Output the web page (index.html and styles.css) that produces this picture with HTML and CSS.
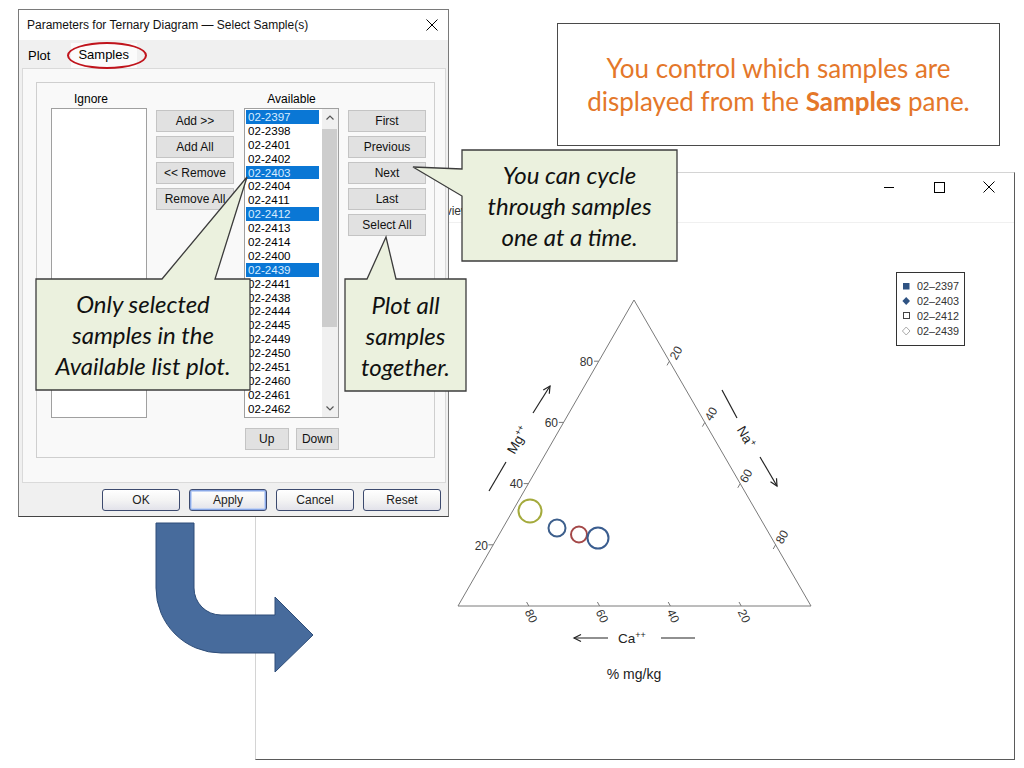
FILE: index.html
```html
<!DOCTYPE html>
<html>
<head>
<meta charset="utf-8">
<title>Ternary Diagram Samples</title>
<link rel="stylesheet" href="styles.css">
</head>
<body>
<div class="stage">

  <div class="plotwin">
    <div class="plotbar">
      <div class="ctrlrow">
        <span class="ctrl"><svg width="10" height="10" viewBox="0 0 10 10"><line x1="0" y1="5.5" x2="10" y2="5.5" stroke="#000"/></svg></span>
        <span class="ctrl"><svg width="11" height="11" viewBox="0 0 11 11"><rect x="0.5" y="0.5" width="10" height="10" fill="none" stroke="#000"/></svg></span>
        <span class="ctrl"><svg width="12" height="12" viewBox="0 0 12 12"><path d="M0.5 0.5 L11.5 11.5 M11.5 0.5 L0.5 11.5" stroke="#000"/></svg></span>
      </div>
      <div class="toolrow"><span>Preview</span></div>
    </div>
    <svg class="chart" width="758" height="536" viewBox="256 223 758 536">
      <polygon points="458,606 634,300 811,606" fill="none" stroke="#7a7a7a" stroke-width="1"/>
      <g stroke="#7a7a7a" stroke-width="1">
        <line x1="598.8" y1="361.2" x2="594" y2="361.2"/>
        <line x1="563.6" y1="422.4" x2="558.8" y2="422.4"/>
        <line x1="528.4" y1="483.6" x2="523.6" y2="483.6"/>
        <line x1="493.2" y1="544.8" x2="488.4" y2="544.8"/>
        <line x1="669.4" y1="361.2" x2="667" y2="365.4"/>
        <line x1="704.8" y1="422.4" x2="702.4" y2="426.6"/>
        <line x1="740.2" y1="483.6" x2="737.8" y2="487.8"/>
        <line x1="775.6" y1="544.8" x2="773.2" y2="549"/>
        <line x1="528.8" y1="606" x2="526.6" y2="602"/>
        <line x1="599.6" y1="606" x2="597.4" y2="602"/>
        <line x1="670.4" y1="606" x2="668.2" y2="602"/>
        <line x1="741.2" y1="606" x2="739" y2="602"/>
      </g>
      <g class="tick">
        <text x="593" y="365.5" text-anchor="end">80</text>
        <text x="558" y="426.5" text-anchor="end">60</text>
        <text x="523" y="487.5" text-anchor="end">40</text>
        <text x="488" y="549.5" text-anchor="end">20</text>
        <text transform="translate(676,353) rotate(-60)" text-anchor="middle" dy="4">20</text>
        <text transform="translate(711,414) rotate(-60)" text-anchor="middle" dy="4">40</text>
        <text transform="translate(746,476) rotate(-60)" text-anchor="middle" dy="4">60</text>
        <text transform="translate(782,537) rotate(-60)" text-anchor="middle" dy="4">80</text>
        <text transform="translate(531,616) rotate(65)" text-anchor="middle" dy="4">80</text>
        <text transform="translate(602,616) rotate(65)" text-anchor="middle" dy="4">60</text>
        <text transform="translate(673,616) rotate(65)" text-anchor="middle" dy="4">40</text>
        <text transform="translate(744,616) rotate(65)" text-anchor="middle" dy="4">20</text>
      </g>
      <g stroke="#222" stroke-width="1.2" fill="none">
        <line x1="489" y1="491" x2="506" y2="462"/>
        <line x1="533" y1="413" x2="550" y2="386"/>
        <polyline points="543.3,390 550,386 549.3,393.8"/>
        <line x1="722" y1="390" x2="737" y2="418"/>
        <line x1="760" y1="457" x2="777" y2="486"/>
        <polyline points="770.5,481.8 777,486 776.5,478.2"/>
        <line x1="608" y1="638" x2="574" y2="638"/>
        <polyline points="581,634.5 574,638 581,641.5"/>
        <line x1="661" y1="638" x2="695" y2="638"/>
      </g>
      <g class="axis">
        <text transform="translate(518,440) rotate(-60)" text-anchor="middle" dy="4.5">Mg<tspan dy="-5.5" font-size="9">++</tspan></text>
        <text transform="translate(746,437) rotate(60)" text-anchor="middle" dy="4.5">Na<tspan dy="-5.5" font-size="9">+</tspan></text>
        <text x="618" y="643">Ca<tspan dy="-5.5" font-size="9">++</tspan></text>
        <text class="unit" x="634" y="679" text-anchor="middle">% mg/kg</text>
      </g>
      <circle cx="530" cy="511" r="11.5" fill="none" stroke="#a4aa3c" stroke-width="2"/>
      <circle cx="557" cy="528" r="8.5" fill="none" stroke="#3d5f8c" stroke-width="2"/>
      <circle cx="579" cy="534.5" r="8" fill="none" stroke="#a44848" stroke-width="2"/>
      <circle cx="598" cy="538" r="10.5" fill="none" stroke="#3a5d8f" stroke-width="2"/>
      <rect x="896.5" y="272.5" width="68" height="73" fill="#fff" stroke="#333" stroke-width="1"/>
      <rect x="903" y="283" width="6.5" height="6.5" fill="#2f5383"/>
      <polygon points="906.2,297 910,301 906.2,305 902.4,301" fill="#2f5383"/>
      <rect x="903.5" y="312.5" width="6" height="6" fill="none" stroke="#444"/>
      <polygon points="906.2,327 910,331 906.2,335 902.4,331" fill="none" stroke="#aaa"/>
      <g class="legend">
        <text x="917" y="290">02–2397</text>
        <text x="917" y="305">02–2403</text>
        <text x="917" y="320">02–2412</text>
        <text x="917" y="335">02–2439</text>
      </g>
    </svg>
  </div>

  <div class="dialog">
    <div class="dlg-title">
      <span>Parameters for Ternary Diagram — Select Sample(s)</span>
      <svg width="12" height="12" viewBox="0 0 12 12"><path d="M0.5 0.5 L11.5 11.5 M11.5 0.5 L0.5 11.5" stroke="#000" stroke-width="1"/></svg>
    </div>
    <div class="tabs">
      <span class="tab">Plot</span>
      <span class="tab active">Samples</span>
      <span class="ring"></span>
    </div>
    <div class="tabpage">
      <div class="group">
        <div class="col col-ignore">
          <div class="lbl">Ignore</div>
          <div class="listbox"></div>
        </div>
        <div class="col col-btns">
          <div class="btn">Add &gt;&gt;</div>
          <div class="btn">Add All</div>
          <div class="btn">&lt;&lt; Remove</div>
          <div class="btn">Remove All</div>
        </div>
        <div class="col col-avail">
          <div class="lbl">Available</div>
          <div class="listbox avail">
            <div class="items">
              <div class="it sel">02-2397</div>
              <div class="it">02-2398</div>
              <div class="it">02-2401</div>
              <div class="it">02-2402</div>
              <div class="it sel">02-2403</div>
              <div class="it">02-2404</div>
              <div class="it">02-2411</div>
              <div class="it sel">02-2412</div>
              <div class="it">02-2413</div>
              <div class="it">02-2414</div>
              <div class="it">02-2400</div>
              <div class="it sel">02-2439</div>
              <div class="it">02-2441</div>
              <div class="it">02-2438</div>
              <div class="it">02-2444</div>
              <div class="it">02-2445</div>
              <div class="it">02-2449</div>
              <div class="it">02-2450</div>
              <div class="it">02-2451</div>
              <div class="it">02-2460</div>
              <div class="it">02-2461</div>
              <div class="it">02-2462</div>
            </div>
            <div class="sbar">
              <div class="sb-btn"><svg width="8" height="5" viewBox="0 0 8 5"><polyline points="0.5,4.5 4,1 7.5,4.5" fill="none" stroke="#555" stroke-width="1.2"/></svg></div>
              <div class="sb-track"><div class="thumb"></div></div>
              <div class="sb-btn"><svg width="8" height="5" viewBox="0 0 8 5"><polyline points="0.5,0.5 4,4 7.5,0.5" fill="none" stroke="#555" stroke-width="1.2"/></svg></div>
            </div>
          </div>
          <div class="updown">
            <div class="btn small">Up</div>
            <div class="btn small">Down</div>
          </div>
        </div>
        <div class="col col-btns">
          <div class="btn">First</div>
          <div class="btn">Previous</div>
          <div class="btn">Next</div>
          <div class="btn">Last</div>
          <div class="btn">Select All</div>
        </div>
      </div>
    </div>
    <div class="dlg-foot">
      <div class="xpbtn">OK</div>
      <div class="xpbtn default">Apply</div>
      <div class="xpbtn">Cancel</div>
      <div class="xpbtn">Reset</div>
    </div>
  </div>

  <svg class="bigarrow" width="170" height="165" viewBox="150 515 170 165">
    <path d="M156,523 H194 V588 A27,27 0 0 0 221,615 H275 V597 L313,635 L275,672 V653 H221 A65,65 0 0 1 156,588 Z" fill="#476b9c" stroke="#2e4d78" stroke-width="1"/>
  </svg>

  <svg class="shapes" width="1024" height="768" viewBox="0 0 1024 768">
    <polygon points="462,150 677,150 677,261 462,261 462,196 413,167 462,169" class="bubble"/>
    <polygon points="36,279 162,279 247,177 215,279 250,279 250,390 36,390" class="bubble"/>
    <polygon points="345,279 367,279 386,237 396,279 466,279 466,391 345,391" class="bubble"/>
  </svg>

  <div class="callout c1"><p>You can cycle<br>through samples<br>one at a time.</p></div>
  <div class="callout c2"><p>Only selected<br>samples in the<br>Available list plot.</p></div>
  <div class="callout c3"><p>Plot all<br>samples<br>together.</p></div>

  <div class="note"><p>You control which samples are<br>displayed from the <b>Samples</b> pane.</p></div>
</div>
</body>
</html>
```

FILE: styles.css
```css
html, body {
  margin: 0;
  padding: 0;
  background: #fff;
}

.stage {
  position: relative;
  width: 1024px;
  height: 768px;
  overflow: hidden;
  font-family: "Liberation Sans", Arial, sans-serif;
  background: #fff;
}

/* ---------- plot window ---------- */
.plotwin {
  position: absolute;
  left: 255px;
  top: 172px;
  width: 760px;
  height: 588px;
  box-sizing: border-box;
  border: 1px solid #d4d4d4;
  border-right-color: #5a5a5a;
  border-bottom-color: #5a5a5a;
  background: #fff;
  display: flex;
  flex-direction: column;
}

.plotbar {
  height: 49px;
  border-bottom: 1px solid #f0f0f0;
  display: flex;
  flex-direction: column;
}

.ctrlrow {
  height: 28px;
  display: flex;
  justify-content: flex-end;
}

.ctrl {
  width: 50px;
  height: 28px;
  display: flex;
  align-items: center;
  justify-content: center;
}

.toolrow {
  height: 21px;
  padding-left: 171px;
  font-size: 12px;
  line-height: 21px;
  color: #333;
}

.chart {
  display: block;
}

.chart .tick text {
  font-family: "Liberation Sans", Arial, sans-serif;
  font-size: 12px;
  fill: #333;
}

.chart .axis text {
  font-family: "Liberation Sans", Arial, sans-serif;
  font-size: 13.5px;
  fill: #222;
}

.chart .axis text.unit {
  font-size: 14px;
}

.chart .legend text {
  font-family: "Liberation Sans", Arial, sans-serif;
  font-size: 10.8px;
  fill: #333;
}

/* ---------- dialog ---------- */
.dialog {
  position: absolute;
  left: 18px;
  top: 9px;
  width: 431px;
  height: 508px;
  box-sizing: border-box;
  border: 1px solid #7a7a7a;
  border-bottom-color: #444;
  background: #f0f0f0;
  display: flex;
  flex-direction: column;
  font-size: 12px;
  color: #000;
}

.dlg-title {
  height: 30px;
  background: #fff;
  display: flex;
  align-items: center;
  justify-content: space-between;
  padding: 0 10px 0 8px;
  font-size: 12px;
  color: #111;
}

.tabs {
  position: relative;
  height: 28px;
  display: flex;
  align-items: flex-end;
  padding-left: 3px;
  font-size: 13px;
}

.tab {
  height: 25px;
  line-height: 25px;
  padding: 0 6px;
}

.tab.active {
  margin-left: 15px;
  padding: 0 8px 0 7px;
  background: #fbfbfb;
  line-height: 23px;
  height: 25px;
}

.ring {
  position: absolute;
  left: 48px;
  top: 2px;
  width: 80px;
  height: 27px;
  box-sizing: border-box;
  border: 2px solid #c0141c;
  border-radius: 50%;
}

.tabpage {
  height: 415px;
  box-sizing: border-box;
  margin: 0 2px 0 3px;
  background: #f9f9f9;
  border: 1px solid #dadada;
  padding: 13px 0 0 13px;
}

.group {
  width: 399px;
  height: 376px;
  box-sizing: border-box;
  border: 1px solid #cfcfcf;
  display: flex;
  align-items: flex-start;
  padding-left: 14px;
}

.col {
  display: flex;
  flex-direction: column;
}

.col-ignore { width: 96px; }
.col-avail { width: 95px; margin-left: 10px; }

.col-btns {
  width: 78px;
  margin-left: 9px;
  padding-top: 27px;
  gap: 4px;
}

.lbl {
  height: 25px;
  box-sizing: border-box;
  padding-top: 9px;
  line-height: 14px;
  text-align: center;
}

.col-ignore .lbl { padding-right: 16px; }

.listbox {
  height: 310px;
  box-sizing: border-box;
  border: 1px solid #a0a0a0;
  background: #fff;
}

.listbox.avail {
  display: flex;
}

.items {
  flex: 1;
  padding-top: 1px;
}

.it {
  height: 13.9px;
  line-height: 13.9px;
  font-size: 11.6px;
  padding-left: 2px;
  margin: 0 3px 0 1px;
  color: #000;
}

.it.sel {
  background: #0a77d5;
  color: #d8ecff;
}

.sbar {
  width: 16px;
  display: flex;
  flex-direction: column;
  background: #f0f0f0;
}

.sb-btn {
  height: 17px;
  display: flex;
  align-items: center;
  justify-content: center;
}

.sb-track {
  flex: 1;
  padding: 3px 1px 0 0;
}

.thumb {
  height: 198px;
  background: #cdcdcd;
}

.btn {
  height: 22px;
  box-sizing: border-box;
  border: 1px solid #c4c4c4;
  background: #e1e1e1;
  display: flex;
  align-items: center;
  justify-content: center;
  font-size: 12px;
  color: #111;
}

.updown {
  display: flex;
  gap: 7px;
  margin-top: 10px;
  padding-left: 1px;
}

.btn.small {
  width: 44px;
}

.dlg-foot {
  flex: 1;
  display: flex;
  justify-content: flex-end;
  align-items: flex-start;
  gap: 9px;
  padding: 6px 7px 0 0;
}

.xpbtn {
  width: 78px;
  height: 22px;
  box-sizing: border-box;
  border: 1px solid #3c4a6e;
  border-radius: 3px;
  background: linear-gradient(#ffffff, #f4f4f4 50%, #e2e2ea);
  display: flex;
  align-items: center;
  justify-content: center;
  font-size: 12px;
  color: #222;
}

.xpbtn.default {
  box-shadow: inset 0 0 0 1px #8aa8e6, inset 0 0 0 2px #c4d4f4;
}

/* ---------- arrow + callouts ---------- */
.bigarrow {
  position: absolute;
  left: 150px;
  top: 515px;
}

.shapes {
  position: absolute;
  left: 0;
  top: 0;
  pointer-events: none;
}

.bubble {
  fill: #ebf1de;
  stroke: #3c3c3c;
  stroke-width: 1.3;
}

.callout {
  position: absolute;
  display: flex;
  align-items: center;
  justify-content: center;
  text-align: center;
  font-family: Lato, "Open Sans", sans-serif;
  font-style: italic;
  font-size: 24px;
  line-height: 31px;
  color: #111;
}

.callout p,
.note p {
  margin: 0;
}

.c1 { left: 462px; top: 150px; width: 215px; height: 111px; }
.c2 { left: 36px; top: 279px; width: 214px; height: 111px; }
.c3 { left: 345px; top: 279px; width: 121px; height: 112px; }

.note {
  position: absolute;
  left: 557px;
  top: 23px;
  width: 443px;
  height: 123px;
  box-sizing: border-box;
  border: 1.5px solid #4a4a4a;
  background: #fff;
  display: flex;
  align-items: center;
  justify-content: center;
  text-align: center;
  font-family: Lato, "Open Sans", sans-serif;
  font-size: 26px;
  line-height: 33px;
  color: #e4772a;
}

.note b {
  font-weight: 700;
}
```
